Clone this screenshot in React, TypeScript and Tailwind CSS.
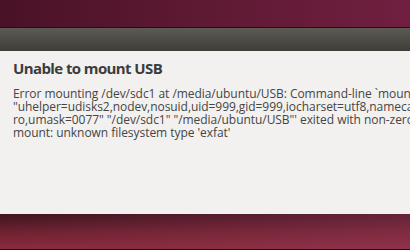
import React from "react";

export default function App() {
  const font = { fontFamily: '"Open Sans", "Noto Sans", sans-serif' };
  return (
    <div className="w-[410px] h-[250px] overflow-hidden flex flex-col" style={font}>
      <div className="h-[28px] bg-gradient-to-r from-[#4a1226] via-[#5e1a33] to-[#701f40] border-b border-[#2a0a14]" />
      <div className="h-[23px] bg-gradient-to-b from-[#5c5b53] to-[#3e3d38]" />
      <div className="h-[163px] bg-[#f2f1f0] pl-[13px] pt-[7px] overflow-hidden">
        <div className="text-[15px] font-bold text-[#3c3c3c] leading-[20px] whitespace-nowrap tracking-[-0.6px]">
          Unable to mount USB
        </div>
        <div className="mt-[9px] text-[12px] leading-[13px] text-[#454545] whitespace-nowrap tracking-[-0.05px]">
          <div>Error mounting /dev/sdc1 at /media/ubuntu/USB: Command-line `mount -t "auto" -o</div>
          <div>"uhelper=udisks2,nodev,nosuid,uid=999,gid=999,iocharset=utf8,namecase=0,errors=remount-</div>
          <div>ro,umask=0077" "/dev/sdc1" "/media/ubuntu/USB"' exited with non-zero exit status 32:</div>
          <div>mount: unknown filesystem type 'exfat'</div>
        </div>
      </div>
      <div className="flex-1 bg-gradient-to-b from-[#3f1420] via-[#6e2230] to-[#8a2c40] relative">
        <div className="absolute inset-0 bg-gradient-to-r from-transparent to-[#9a3a5a] opacity-40" />
        <div className="absolute left-0 right-0 bottom-0 h-[1px] bg-[#2a0a12]" />
      </div>
    </div>
  );
}
